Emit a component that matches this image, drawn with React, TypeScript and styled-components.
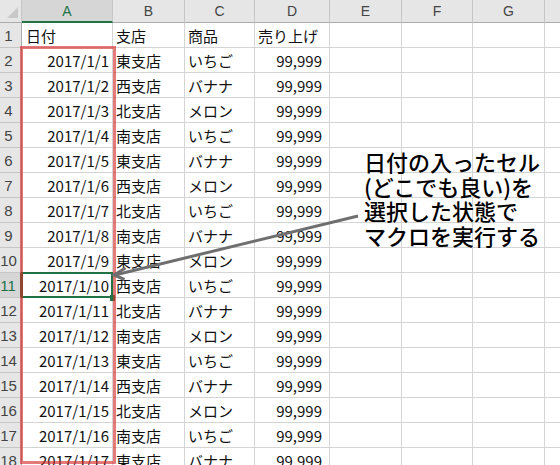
import React from "react";
import styled, { createGlobalStyle, css } from "styled-components";

const GlobalStyle = createGlobalStyle`
  html, body { margin: 0; padding: 0; background: #fff; overflow: hidden; }
  * { box-sizing: border-box; }
`;

const GREEN = "#217346";
const GRID = "#d4d4d4";

const Sheet = styled.div`
  position: relative;
  width: 560px;
  height: 465px;
  overflow: hidden;
  background: #fff;
`;

const Grid = styled.div`
  display: grid;
  grid-template-columns: 22px 91px 72px 70px 75px 72px 71px 72px 72px;
  grid-template-rows: 23px;
  grid-auto-rows: 25px;
`;

const Corner = styled.div`
  position: relative;
  background: #e6e6e6;
  border-right: 1px solid #c6c6c6;
  border-bottom: 1px solid #ababab;
  &::after {
    content: "";
    position: absolute;
    right: 3px;
    bottom: 4px;
    width: 0;
    height: 0;
    border-left: 11px solid transparent;
    border-bottom: 11px solid #c9c9c9;
  }
`;

const ColHeader = styled.div<{ $selected?: boolean }>`
  display: flex;
  align-items: center;
  justify-content: center;
  background: #e6e6e6;
  border-right: 1px solid #c6c6c6;
  border-bottom: 1px solid #ababab;
  font-family: "Liberation Sans", Arial, sans-serif;
  font-size: 14px;
  color: #444;
  ${(p) =>
    p.$selected &&
    css`
      background: #d6d6d6;
      color: ${GREEN};
      border-bottom: 2px solid ${GREEN};
    `}
`;

const RowHeader = styled.div<{ $selected?: boolean }>`
  display: flex;
  align-items: center;
  justify-content: center;
  padding-right: 4px;
  background: #e6e6e6;
  border-right: 1px solid #ababab;
  border-bottom: 1px solid #c6c6c6;
  font-family: "Liberation Sans", Arial, sans-serif;
  font-size: 15px;
  color: #444;
  ${(p) =>
    p.$selected &&
    css`
      background: #d6d6d6;
      color: ${GREEN};
      border-right: 2px solid ${GREEN};
    `}
`;

const Cell = styled.div<{ $align?: "left" | "right"; $pad?: number; $selected?: boolean }>`
  position: relative;
  display: flex;
  align-items: center;
  justify-content: ${(p) => (p.$align === "right" ? "flex-end" : "flex-start")};
  padding: ${(p) => (p.$align === "right" ? `0 ${p.$pad ?? 3}px 0 0` : `0 0 0 ${p.$pad ?? 3}px`)};
  border-right: 1px solid ${GRID};
  border-bottom: 1px solid ${GRID};
  font-family: "Noto Sans CJK JP", "Liberation Sans", sans-serif;
  font-size: 15px;
  line-height: 1;
  color: #111;
  white-space: nowrap;
  ${(p) =>
    p.$selected &&
    css`
      z-index: 2;
      &::after {
        content: "";
        position: absolute;
        top: -1px;
        left: -1px;
        right: -1px;
        bottom: -1px;
        border: 2px solid ${GREEN};
      }
      &::before {
        content: "";
        position: absolute;
        right: -3px;
        bottom: -4px;
        width: 5px;
        height: 6px;
        background: ${GREEN};
        z-index: 3;
      }
    `}
`;

const RedFrame = styled.div`
  position: absolute;
  left: 20px;
  top: 46px;
  width: 96px;
  height: 418px;
  border: 3px solid rgba(214, 40, 40, 0.62);
  z-index: 5;
  pointer-events: none;
`;

const ArrowLayer = styled.svg`
  position: absolute;
  left: 0;
  top: 0;
  z-index: 6;
  pointer-events: none;
`;

const Callout = styled.div`
  position: absolute;
  left: 364px;
  top: 149px;
  z-index: 6;
  font-family: "Noto Sans CJK JP", sans-serif;
  font-size: 22px;
  font-weight: 500;
  line-height: 24.7px;
  color: #000;
  white-space: nowrap;
`;

const COLS = ["A", "B", "C", "D", "E", "F", "G", "H"];
const BRANCHES = ["東支店", "西支店", "北支店", "南支店"];
const ITEMS = ["いちご", "バナナ", "メロン"];

type Row = { n: number; date: string; branch: string; item: string; sales: string };

const rows: Row[] = Array.from({ length: 17 }, (_, i) => ({
  n: i + 2,
  date: `2017/1/${i + 1}`,
  branch: BRANCHES[i % 4],
  item: ITEMS[i % 3],
  sales: "99,999",
}));

const SELECTED_ROW = 11;

export default function App() {
  return (
    <>
      <GlobalStyle />
      <Sheet>
        <Grid>
          <Corner />
          {COLS.map((c) => (
            <ColHeader key={c} $selected={c === "A"}>
              {c}
            </ColHeader>
          ))}

          <RowHeader>1</RowHeader>
          <Cell $pad={4}>日付</Cell>
          <Cell>支店</Cell>
          <Cell>商品</Cell>
          <Cell>売り上げ</Cell>
          <Cell />
          <Cell />
          <Cell />
          <Cell />

          {rows.map((r) => (
            <React.Fragment key={r.n}>
              <RowHeader $selected={r.n === SELECTED_ROW}>{r.n}</RowHeader>
              <Cell $align="right" $pad={3} $selected={r.n === SELECTED_ROW}>
                {r.date}
              </Cell>
              <Cell>{r.branch}</Cell>
              <Cell>{r.item}</Cell>
              <Cell $align="right" $pad={7}>
                {r.sales}
              </Cell>
              <Cell />
              <Cell />
              <Cell />
              <Cell />
            </React.Fragment>
          ))}
        </Grid>

        <RedFrame />

        <ArrowLayer width={560} height={465} viewBox="0 0 560 465">
          <line x1={358} y1={216} x2={117} y2={274.5} stroke="#6f6f6f" strokeWidth={3} />
          <polyline
            points="125.5,268 114,275 124.5,279.5"
            fill="none"
            stroke="#6f6f6f"
            strokeWidth={3}
            strokeLinejoin="miter"
          />
        </ArrowLayer>

        <Callout>
          日付の入ったセル
          <br />
          (どこでも良い)を
          <br />
          選択した状態で
          <br />
          マクロを実行する
        </Callout>
      </Sheet>
    </>
  );
}
